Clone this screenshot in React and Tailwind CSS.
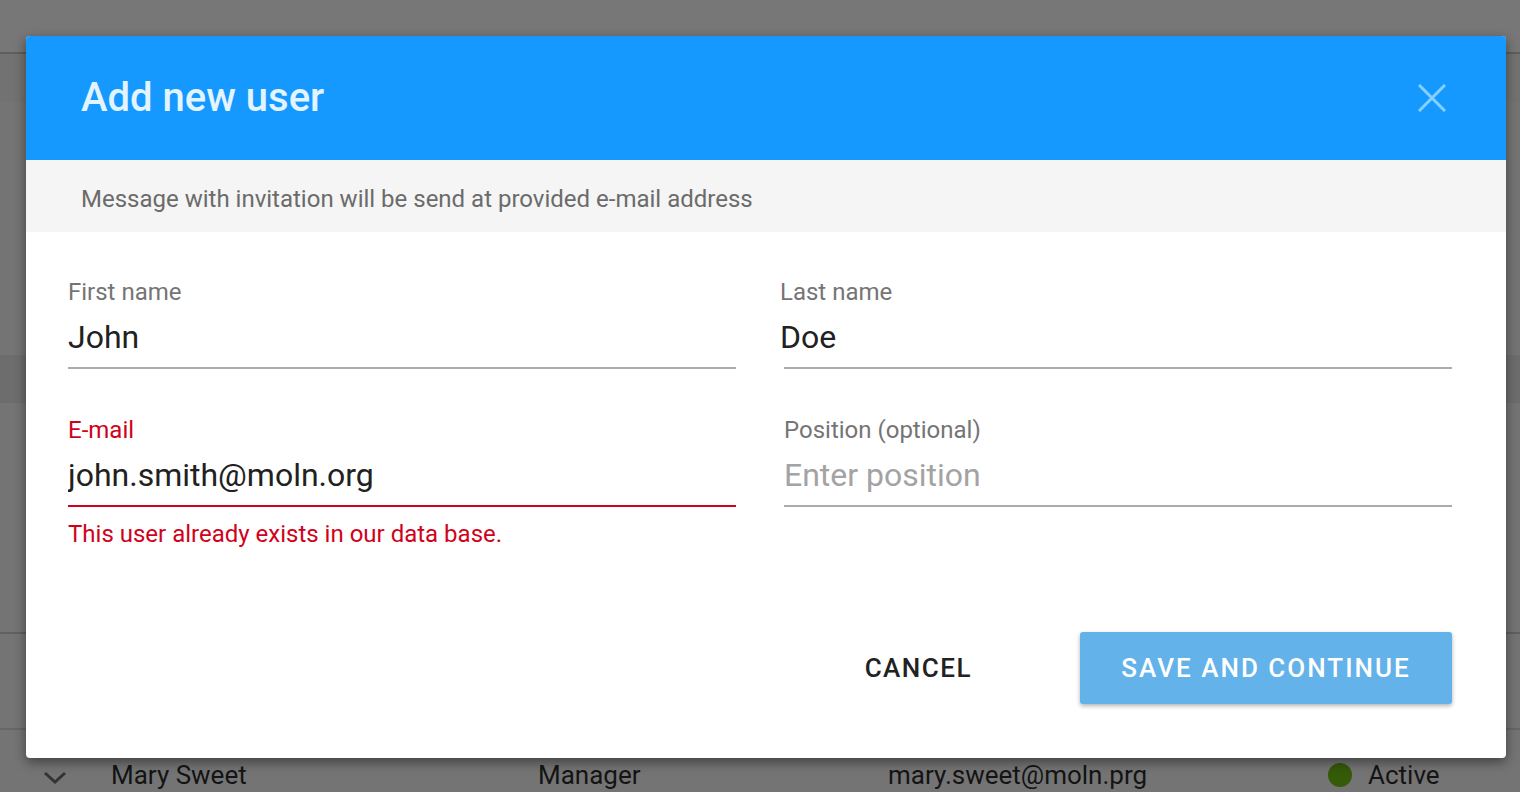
import React from "react";

function Field({ label, value, placeholder, error, shift }) {
  return (
    <div className="flex flex-col">
      <label
        className={`text-[24px] leading-[26px] ${error ? "text-[#d0021b]" : "text-[#757575]"} ${shift ? "-ml-1" : ""}`}
      >
        {label}
      </label>
      <div
        className={`mt-[14px] pb-[12px] border-b-2 ${error ? "border-[#d0021b]" : "border-[#ababab]"}`}
      >
        <input
          className={`w-full bg-transparent outline-none text-[32px] leading-[36px] text-[#212121] placeholder:text-[#a3a3a3] ${shift ? "-ml-1" : ""}`}
          defaultValue={value}
          placeholder={placeholder}
        />
      </div>
      {error && (
        <p className="mt-[14px] text-[24px] leading-[26px] text-[#d0021b]">{error}</p>
      )}
    </div>
  );
}

export default function App() {
  return (
    <div
      className="relative w-[1520px] h-[792px] overflow-hidden bg-[#747474]"
      style={{ fontFamily: "Roboto, 'Noto Sans', sans-serif" }}
    >
      {/* page behind the overlay */}
      <div className="flex flex-col">
        <div className="h-[52px] bg-[#777777]" />
        <div className="h-[2px] bg-[#5e5e5e]" />
        <div className="h-[48px] bg-[#727272]" />
        <div className="h-[253px] bg-[#747474]" />
        <div className="h-[48px] bg-[#6d6d6d]" />
        <div className="h-[229px] bg-[#747474]" />
        <div className="h-[2px] bg-[#606060]" />
        <div className="h-[94px] bg-[#747474]" />
        <div className="h-[2px] bg-[#676767]" />
        <div className="h-[62px] pt-[30px] flex items-start text-[26px] leading-[30px] text-[#141414]">
          <svg width="26" height="16" viewBox="0 0 26 16" className="ml-[42px] mt-[10px]">
            <path d="M3 3 L13 12 L23 3" fill="none" stroke="#333" strokeWidth="3" />
          </svg>
          <span className="ml-[43px] w-[427px]">Mary Sweet</span>
          <span className="w-[350px]">Manager</span>
          <span className="w-[440px]">mary.sweet@moln.prg</span>
          <span className="w-6 h-6 mt-[3px] rounded-full bg-[#355a08]" />
          <span className="ml-[16px]">Active</span>
        </div>
      </div>

      {/* modal */}
      <div className="absolute left-[26px] top-[36px] w-[1480px] h-[722px] bg-white rounded-[4px] overflow-hidden shadow-[0_4px_12px_rgba(0,0,0,0.45)] flex flex-col">
        <div className="h-[124px] bg-[#1599ff] flex items-center justify-between pl-[55px] pr-[60px]">
          <h2 className="text-[40px] font-medium text-[#e3f4ff] leading-none">Add new user</h2>
          <svg width="28" height="28" viewBox="0 0 28 28">
            <path d="M1 1 L27 27 M27 1 L1 27" stroke="#86d0ff" strokeWidth="3" />
          </svg>
        </div>
        <div className="h-[72px] bg-[#f5f5f5] flex items-center pl-[55px] pt-[6px] text-[24px] text-[#6b6b6b]">
          Message with invitation will be send at provided e-mail address
        </div>
        <div className="pt-[47px] pl-[42px] pr-[54px] grid grid-cols-2 gap-x-12 gap-y-[48px] items-start">
          <Field label="First name" value="John" />
          <Field label="Last name" value="Doe" shift />
          <Field
            label="E-mail"
            value="john.smith@moln.org"
            error="This user already exists in our data base."
          />
          <Field label="Position (optional)" placeholder="Enter position" />
        </div>
        <div className="mt-[85px] pr-[54px] flex justify-end items-center">
          <button className="px-6 h-[72px] text-[26px] font-medium tracking-[1.5px] text-[#222] mr-[84px]">
            CANCEL
          </button>
          <button className="w-[372px] h-[72px] rounded-[3px] bg-[#63b2e9] text-white text-[26px] font-medium tracking-[2px] shadow-[0_2px_4px_rgba(0,0,0,0.3)]">
            SAVE AND CONTINUE
          </button>
        </div>
      </div>
    </div>
  );
}
